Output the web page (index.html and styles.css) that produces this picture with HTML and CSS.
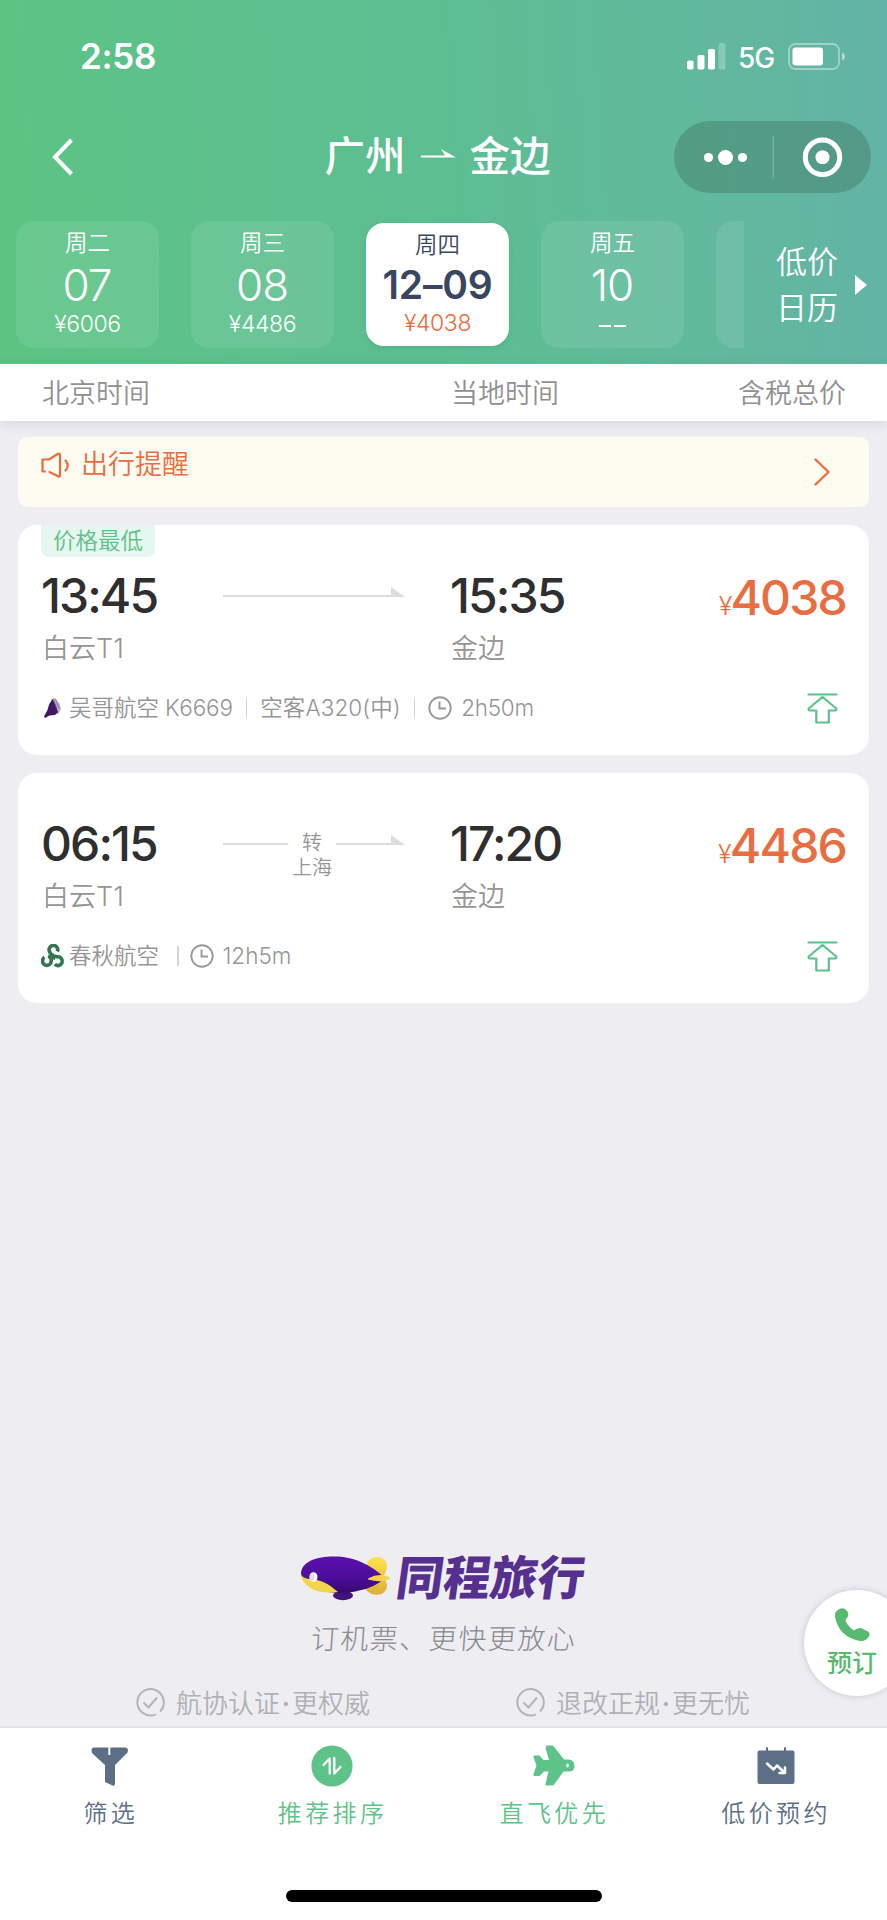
FILE: index.html
```html
<!DOCTYPE html>
<html lang="zh-CN">
<head>
<meta charset="utf-8">
<title>广州 - 金边 航班</title>
<link rel="stylesheet" href="styles.css">
</head>
<body>
<div class="app">
  <header class="top">
    <div class="status">
      <span class="clock">2:58</span>
      <div class="signals">
        <svg class="bars" width="39" height="27" viewBox="0 0 39 27" fill="#fff"><rect x="0" y="17.5" width="6.5" height="9" rx="1.8"/><rect x="10.500" y="12" width="7" height="14.500" rx="1.800"/><rect x="21" y="6" width="7" height="20.500" rx="1.800"/><rect x="31.500" y="0" width="7" height="26.500" rx="1.800" opacity=".25"/></svg>
        <span class="net">5G</span>
        <svg class="battery" width="58" height="27" viewBox="0 0 58 27"><rect x="1" y="1" width="50" height="25" rx="6.500" fill="none" stroke="#fff" stroke-opacity=".4" stroke-width="1.800"/><rect x="4.500" y="4.500" width="30.500" height="18" rx="3" fill="#fff"/><path d="M54 9.500c4 1.500 4 6.500 0 8z" fill="#fff" fill-opacity=".5"/></svg>
      </div>
    </div>
    <div class="nav">
      <svg class="back" width="24" height="40" viewBox="0 0 24 40"><path d="M22.500 3 6 20l16.500 17" fill="none" stroke="#fff" stroke-width="4"/></svg>
      <h1 class="route"><span>广州</span><svg width="36" height="12" viewBox="0 0 36 12"><path d="M0 7.600V9.600H35L20 1l4 6.600z" fill="#fff"/></svg><span>金边</span></h1>
      <div class="capsule">
        <svg width="197" height="72" viewBox="0 0 197 72" fill="#fff"><circle cx="34.500" cy="36.500" r="4.600"/><circle cx="51.500" cy="36.500" r="7.500"/><circle cx="68.500" cy="36.500" r="4.600"/><rect x="98.500" y="15" width="1.500" height="43" opacity=".2"/><circle cx="148.500" cy="36.300" r="17.200" fill="none" stroke="#fff" stroke-width="5"/><circle cx="148.500" cy="36.300" r="7"/></svg>
      </div>
    </div>
    <div class="dates">
      <div class="strip">
        <div class="day"><span class="week">周二</span><span class="num">07</span><span class="fare">¥6006</span></div>
        <div class="day"><span class="week">周三</span><span class="num">08</span><span class="fare">¥4486</span></div>
        <div class="day active"><span class="week">周四</span><span class="num">12–09</span><span class="fare">¥4038</span></div>
        <div class="day"><span class="week">周五</span><span class="num">10</span><span class="none"><i></i><i></i></span></div>
        <div class="day"></div>
      </div>
      <div class="calendar"><span>低价<br>日历</span><svg width="12" height="20" viewBox="0 0 12 20"><path d="M0 0 12 10 0 20z" fill="#fff"/></svg></div>
    </div>
  </header>

  <div class="cols"><span>北京时间</span><span>当地时间</span><span class="right">含税总价</span></div>

  <main class="list">
    <div class="notice">
      <svg class="horn" width="30" height="28" viewBox="0 0 30 28" fill="none" stroke="#ea6d41" stroke-width="2.200" stroke-linecap="round" stroke-linejoin="round"><path d="M4 20.500H1.500V8.500H8L16.500 3Q19 2 19 4V24.500Q19 26.500 16.500 25L8.500 21"/><path d="M24.500 9.500q4.500 5 0 10"/></svg>
      <span class="notice-text">出行提醒</span>
      <svg class="more" width="18" height="30" viewBox="0 0 18 30"><path d="M2.500 2.500 15.500 15 2.500 27.500" fill="none" stroke="#ea6d41" stroke-width="2.400" stroke-linecap="round" stroke-linejoin="round"/></svg>
    </div>

    <article class="flight">
      <span class="tag">价格最低</span>
      <div class="trip">
        <div class="stop"><b>13:45</b><span>白云T1</span></div>
        <div class="path"><i class="line"></i><svg class="tip" width="14" height="10" viewBox="0 0 14 10"><path d="M0 0 14 10H0z" fill="#dcdcdc"/></svg></div>
        <div class="stop"><b>15:35</b><span>金边</span></div>
        <div class="price"><small>¥</small>4038</div>
      </div>
      <div class="meta">
        <svg class="airline" width="24" height="24" viewBox="0 0 24 24"><path d="M10.500 3.500 13 2l5.500 5.500 1.500 5-2.500 5.500-9-1z" fill="#b9b0c3"/><path d="M11.500 3 15 10.500 17 16 14 19l-5.500.5L4 22 3 20.500 6.500 14 8 8.500z" fill="#431763"/><path d="M12.500 3l3 9m-1-9.500 3.500 10" stroke="#6d5b7d" stroke-width=".7"/></svg>
        <span class="name">吴哥航空</span><span class="code">K6669</span><i class="sep"></i><span class="plane">空客A320(中)</span><i class="sep"></i>
        <svg class="dur" width="24" height="24" viewBox="0 0 24 24" fill="none" stroke="#999" stroke-width="1.900"><circle cx="12" cy="12" r="10.700"/><path d="M11.500 5.500v7h6.500"/></svg><span>2h50m</span>
        <svg class="up" width="31" height="31" viewBox="0 0 31 31" fill="none" stroke="#5cc08a" stroke-width="2.200" stroke-linecap="round" stroke-linejoin="round"><path d="M1.500 1.500h28M15.500 4 29.300 15.500Q30 17.500 28 17.500H21.800V29.500H9.300V17.500H3Q1 17.500 1.700 15.500z"/></svg>
      </div>
    </article>

    <article class="flight">
      <div class="trip">
        <div class="stop"><b>06:15</b><span>白云T1</span></div>
        <div class="path"><i class="line first"></i><span class="via">转<br>上海</span><i class="line"></i><svg class="tip" width="14" height="10" viewBox="0 0 14 10"><path d="M0 0 14 10H0z" fill="#dcdcdc"/></svg></div>
        <div class="stop"><b>17:20</b><span>金边</span></div>
        <div class="price"><small>¥</small>4486</div>
      </div>
      <div class="meta">
        <svg class="airline" width="24" height="24" viewBox="0 0 24 24" fill="none" stroke="#357650" stroke-width="3.600"><path d="M16.300 7.500A4.300 4.300 0 1 0 8.500 7.500Q9 9.500 11 11T12 15.500"/><path d="M3.500 13.300A4.400 4.400 0 1 0 9.800 19Q11.500 13.500 7 12.300"/><path d="M13.800 20.300A4.400 4.400 0 1 0 16.500 12.800Q13 13 10.500 10.500"/></svg>
        <span class="name">春秋航空</span><i class="sep wide"></i>
        <svg class="dur" width="24" height="24" viewBox="0 0 24 24" fill="none" stroke="#999" stroke-width="1.900"><circle cx="12" cy="12" r="10.700"/><path d="M11.500 5.500v7h6.500"/></svg><span>12h5m</span>
        <svg class="up" width="31" height="31" viewBox="0 0 31 31" fill="none" stroke="#5cc08a" stroke-width="2.200" stroke-linecap="round" stroke-linejoin="round"><path d="M1.500 1.500h28M15.500 4 29.300 15.500Q30 17.500 28 17.500H21.800V29.500H9.300V17.500H3Q1 17.500 1.700 15.500z"/></svg>
      </div>
    </article>
  </main>

  <section class="brand">
    <div class="logo">
      <svg width="90" height="48" viewBox="0 0 90 48">
        <defs>
          <linearGradient id="hull" x1="0" y1="0" x2="0" y2="1"><stop offset="0" stop-color="#5c0fae"/><stop offset=".6" stop-color="#4c0d9a"/><stop offset="1" stop-color="#350a6d"/></linearGradient>
          <linearGradient id="fin" x1="0" y1="0" x2="0" y2="1"><stop offset="0" stop-color="#ffe34d"/><stop offset="1" stop-color="#dcae38"/></linearGradient>
        </defs>
        <path d="M67 8C71-1 87 0 87 11q0 5-3 9l-4 3q7 1 7 7c0 12-15 12-21 5z" fill="url(#fin)"/>
        <ellipse cx="43" cy="40.500" rx="10" ry="4.700" fill="#3f127c"/>
        <path d="M1 19C1 -1 43-2 61 7q12 5 24 16-11 10-26 12.500C43 41 3 38 1 19z" fill="url(#hull)"/>
        <path d="M1 19q1 4 8 5c11 0 20 5 29 13C20 40 2 33 1 19z" fill="#f3d64b"/>
        <path d="M68 23.500q11-6 21-1.500l1 1.500q-8 5-22 1z" fill="#f5d347"/>
        <ellipse cx="13.500" cy="22" rx="4" ry="4.800" fill="#fff"/><ellipse cx="12" cy="22.500" rx="2.500" ry="3.200" fill="#dedde8"/>
      </svg>
      <span class="wordmark">同程旅行</span>
    </div>
    <p class="slogan">订机票、更快更放心</p>
    <div class="pledges">
      <div class="pledge"><svg width="29" height="29" viewBox="0 0 29 29" fill="none" stroke="#b4b4b8" stroke-width="2"><path d="M20 26.300A13.200 13.200 0 1 1 24 23.500M7.500 14.500l5 5 8.500-10"/></svg><span>航协认证<em>·</em>更权威</span></div>
      <div class="pledge"><svg width="29" height="29" viewBox="0 0 29 29" fill="none" stroke="#b4b4b8" stroke-width="2"><path d="M20 26.300A13.200 13.200 0 1 1 24 23.500M7.500 14.500l5 5 8.500-10"/></svg><span>退改正规<em>·</em>更无忧</span></div>
    </div>
    <div class="call">
      <svg width="38" height="36" viewBox="0 0 38 36"><path d="M3 4.500Q8-.5 12 2q4 3 3 7-.5 2-2.500 3.500Q13 18 21 23.500q3-3 7-2.500l7 3.500q2.500 2 1 5Q32 35 27 34 6 30 2 10q-.5-3.500 1-5.500z" fill="#58ba6e"/></svg>
      <span>预订</span>
    </div>
  </section>

  <footer class="tabs">
    <div class="tab"><svg width="42" height="42" viewBox="0 0 42 42"><path d="M5 2.500H19.300V10h2V2.500H35.500Q39 2.500 39 5.500 39 8 36.500 9.500L26 20V38.500Q26 41.500 23.500 40.500L16 37V20L4.500 9.500Q2.500 7.500 2.500 5.500 2.500 2.500 5 2.500z" fill="#5d6f86"/></svg><span>筛选</span></div>
    <div class="tab on"><svg width="42" height="42" viewBox="0 0 42 42"><circle cx="21" cy="21" r="20.600" fill="#5ec389"/><path d="M12.500 20 18.700 13.500V28.500M23.300 13v15.500L29.500 22" fill="none" stroke="#fff" stroke-width="2.300" stroke-linecap="round" stroke-linejoin="round"/></svg><span>推荐排序</span></div>
    <div class="tab on"><svg width="42" height="42" viewBox="0 0 42 42"><path d="M13.500 1.500Q12 1 13.500.500h6Q21 1 22 3L31 14.500h5q5.500 1 5.500 6.500T36 26.500H30.500L21.500 39Q20.500 40.500 19 40.500H13.500Q12 40.500 12.500 38.500L15.500 26.500H11L6.500 31H2Q0 31 .5 29L3.500 20.500.500 12.500Q0 10.500 2 10.500H6.500L10.500 15H16L12.500 3z" fill="#5ec389"/><ellipse cx="34.500" cy="20.500" rx="1.300" ry="2" fill="#fff"/></svg><span>直飞优先</span></div>
    <div class="tab"><svg width="42" height="42" viewBox="0 0 42 42"><path d="M12 7V3M30 7V3" stroke="#5d6f86" stroke-width="2" stroke-linecap="round"/><rect x="2.500" y="5.500" width="37" height="33.500" rx="2" fill="#5d6f86"/><path d="M12 18.500 18.500 24.500 22 20.500 29.500 27.500M24.500 28H30V22.500" fill="none" stroke="#fff" stroke-width="2.500" stroke-linecap="round" stroke-linejoin="round"/></svg><span>低价预约</span></div>
  </footer>
  <div class="home"><i></i></div>
</div>
</body>
</html>
```
FILE: styles.css
```css
* { box-sizing: border-box; margin: 0; padding: 0; }
body { font-family: Inter, "Noto Sans CJK SC", sans-serif; font-weight: 350; background: #eeedf2; }
svg { display: block; flex: none; }
i, em { font-style: normal; }
.app { width: 887px; height: 1920px; display: flex; flex-direction: column; overflow: hidden; }

.top { height: 364px; flex: none; color: #fff; background: linear-gradient(86deg, #5bc481 0%, #5dc18b 20%, #5dbe92 50%, #61b99c 77%, #62b6a1 90%, #62b3a6 100%); }
.status { height: 115px; padding: 0 41px 0 80px; display: flex; justify-content: space-between; }
.clock { font-size: 35px; font-weight: 600; line-height: 113px; letter-spacing: -.3px; }
.signals { display: flex; padding-top: 43px; }
.net { width: 62px; padding-left: 12px; font-size: 28px; font-weight: 450; line-height: 31px; letter-spacing: -1px; }
.nav { height: 105px; padding: 6px 16px 0 49px; display: flex; justify-content: space-between; }
.back { margin-top: 16px; }
.route { margin-left: 128px; display: flex; font-size: 40.5px; font-weight: 500; line-height: 72px; }
.route svg { margin: 27px 13px 0 15px; }
.capsule { width: 197px; height: 72px; border-radius: 36px; background: rgba(55, 95, 80, .32); }
.dates { display: flex; }
.strip { width: 744px; height: 132px; padding-left: 16px; display: flex; gap: 32px; overflow: hidden; }
.day { width: 143px; height: 127px; margin-top: 1px; flex: none; border-radius: 18px; background: rgba(255, 255, 255, .09); display: flex; flex-direction: column; align-items: center; }
.week { margin-top: 6px; font-size: 22.5px; line-height: 32px; }
.num { font-size: 44px; font-weight: 320; line-height: 52px; letter-spacing: -1px; margin-right: 1px; }
.fare { font-size: 23px; line-height: 28px; font-weight: 300; margin-top: -1px; letter-spacing: -.4px; }
.none { display: flex; gap: 3px; margin-top: 14px; }
.none i { width: 12px; height: 2px; background: #fff; }
.active { height: 123px; margin-top: 3px; background: #fff; color: #38475f; box-shadow: 0 2px 5px rgba(40, 100, 80, .15); }
.active .week { margin-top: 6px; }
.active .num { font-size: 39px; font-weight: 570; line-height: 48px; letter-spacing: -.2px; margin-right: 0; }
.active .fare { color: #ea6d41; margin-top: 0; }
.calendar { padding-left: 32px; display: flex; font-size: 31px; line-height: 46px; }
.calendar span { padding-top: 19px; }
.calendar svg { margin: 55px 0 0 17px; }

.cols { position: relative; height: 57px; flex: none; padding: 1px 41px 0 42px; background: #fff; color: #909090; font-size: 27px; line-height: 58px; display: grid; grid-template-columns: 409px 1fr auto; box-shadow: 0 3px 12px rgba(60, 60, 80, .12); }

.list { flex: 1; padding: 16px 18px 0; }
.notice { height: 70px; padding: 0 38px 0 23px; border-radius: 9px; background: #fefbf0; display: flex; }
.horn { margin-top: 14px; }
.notice-text { margin-left: 10px; color: #ea6d41; font-size: 27px; line-height: 56px; }
.more { margin: 20px 0 0 auto; }
.flight { position: relative; height: 230px; margin-top: 18px; padding: 42px 24px 0; border-radius: 19px; background: #fff; }
.tag { position: absolute; left: 23px; top: 0; width: 114px; height: 32px; border-radius: 0 0 7px 7px; background: #e6f7ef; color: #5cc08a; font-size: 22.5px; line-height: 31px; text-align: center; }
.trip { height: 124px; display: grid; grid-template-columns: 181px 228px 1fr auto; }
.stop { display: flex; flex-direction: column; }
.stop b { margin-left: -1px; color: #2f2f2f; font-size: 48px; font-weight: 530; line-height: 57px; letter-spacing: -1.9px; }
.stop span { color: #959595; font-size: 27px; line-height: 49px; }
.path { width: 182px; display: flex; align-items: flex-start; padding-top: 20px; }
.line { flex: 1; height: 2.500px; margin-top: 7.500px; background: #dcdcdc; }
.line.first { flex: none; width: 65px; }
.tip { width: 14px; }
.via { width: 48px; margin-top: -4px; text-align: center; color: #959595; font-size: 20px; line-height: 25px; }
.price { margin-right: -1px; color: #ea6d41; font-size: 48px; font-weight: 530; line-height: 61px; letter-spacing: -1.8px; }
.price small { font-size: 25px; font-weight: 300; margin-right: 0; }
.meta { height: 34px; display: flex; align-items: center; color: #959595; font-size: 22.5px; line-height: 34px; }
.airline { margin-left: -1px; }
.name { margin-left: 4px; }
.code { margin-left: 6px; letter-spacing: -.2px; }
.sep { width: 1.500px; height: 20px; margin: 0 13px; background: #d4d4d4; }
.sep.wide { margin: 0 11px 0 18px; }
.plane { letter-spacing: .1px; }
.dur { margin-right: 9px; }
.dur + span { letter-spacing: -.3px; }
.sep.wide + .dur + span { letter-spacing: 0; }
.up { margin-left: auto; margin-right: 7px; }

.brand { position: relative; height: 178px; flex: none; border-bottom: 2px solid #e4e4e8; display: flex; flex-direction: column; align-items: center; }
.logo { height: 56px; display: flex; padding-right: 2px; }
.logo svg { margin-top: 5px; }
.wordmark { margin-left: 7px; font-size: 47px; font-weight: 900; line-height: 55px; color: #55308f; transform: skewX(-8deg); }
.slogan { height: 44px; margin-top: 11px; font-size: 28px; font-weight: 300; line-height: 44px; letter-spacing: 1.500px; color: #88888e; transform: skewX(-4deg); }
.pledges { align-self: stretch; display: grid; grid-template-columns: 380px 1fr; padding: 21px 0 0 136px; }
.pledge { display: flex; gap: 11px; color: #b0b0b5; font-size: 26px; line-height: 43px; }
.pledge svg { margin-top: 6px; }
.pledge em { display: inline-block; width: 12px; text-align: center; font-weight: 600; }
.call { position: absolute; left: 804px; top: 40px; width: 106px; height: 106px; padding: 17px 0 0 23px; border-radius: 50%; background: #fff; box-shadow: 0 0 6px rgba(80, 80, 120, .25); color: #58ba6e; font-size: 25px; font-weight: 500; line-height: 40px; }
.call svg { margin-left: 6px; }

.tabs { height: 122px; flex: none; padding-top: 17px; background: #fff; display: grid; grid-template-columns: repeat(4, 1fr); }
.tab { display: flex; flex-direction: column; align-items: center; color: #5d6f86; font-size: 24px; letter-spacing: 3.400px; line-height: 50px; }
.tab svg { margin-right: 1px; }
.tab span { margin-top: 2px; }
.tab.on { color: #5ec389; }
.home { height: 70px; flex: none; padding-top: 40px; background: #fff; display: flex; justify-content: center; align-items: flex-start; }
.home i { width: 316px; height: 12px; border-radius: 6px; background: #000; }
```
